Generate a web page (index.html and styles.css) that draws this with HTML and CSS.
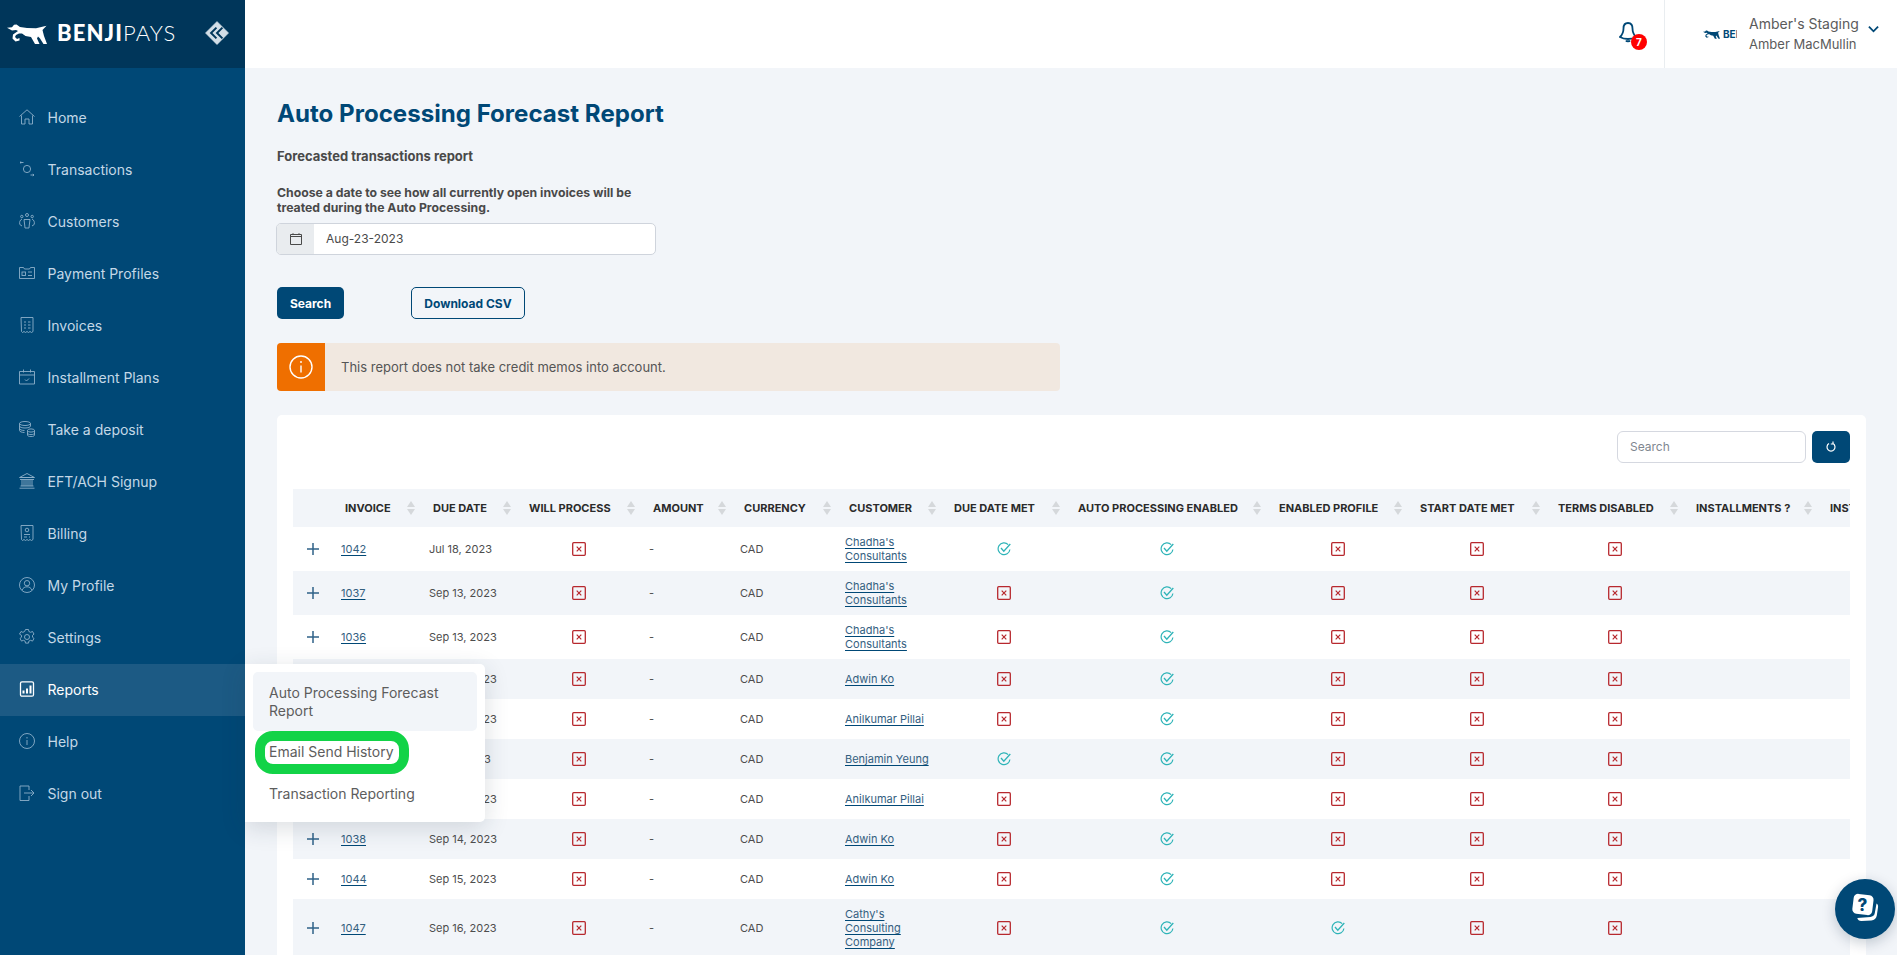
FILE: index.html
```html
<!DOCTYPE html>
<html lang="en">
<head>
<meta charset="utf-8">
<title>Auto Processing Forecast Report</title>
<link rel="stylesheet" href="styles.css">
</head>
<body>
<svg class="defs" aria-hidden="true">
  <symbol id="dog" viewBox="0 0 40 20"><path d="M0 3.800 5 3.200 7 .8 9.500 .6 13 3 20 4 29 4.200 39.500 1.800 35.500 6 37 12 40 20 36.500 20 33 14.500 31 12.500 30 14.500 32.500 20 28 20 24 13 18.500 12 15 9.500 12 9.500 9 11 8 13 10 15 12.500 14 12.500 16.500 8.500 17.500 5.500 14.500 6 10.500 11 7 9 6 5 6.500z"/></symbol>
  <symbol id="x" viewBox="0 0 14 14"><rect x=".7" y=".7" width="12.6" height="12.6" rx="1" fill="none" stroke="#b7282e" stroke-width="1.3"/><path d="M4.700 4.700 9.300 9.300M9.300 4.700 4.700 9.300" fill="none" stroke="#b7282e" stroke-width="1.2"/></symbol>
  <symbol id="ok" viewBox="0 0 14 14"><path d="M11.200 2.600A5.900 5.900 0 1 0 12.900 7.500" fill="none" stroke="#2fb4b8" stroke-width="1.200"/><path d="M4 6 6.800 9.200 13.300 2" fill="none" stroke="#2fb4b8" stroke-width="1.300"/></symbol>
  <symbol id="plus" viewBox="0 0 12 12"><path d="M6 0V12M0 6H12" stroke="#2f6288" stroke-width="1.5"/></symbol>
</svg>
<div class="app">
  <aside class="sidebar">
    <div class="brand">
      <svg class="brand-dog"><use href="#dog"/></svg>
      <span class="brand-name"><b>BENJI</b>PAYS</span>
      <svg class="brand-toggle" viewBox="0 0 24 24"><path d="M12 0 24 12 12 24 0 12Z" fill="#d3dee7" stroke="#d3dee7" stroke-width="1" stroke-linejoin="round" transform="translate(1.5 1.5) scale(.875)"/><path d="M11.500 7 6.500 12 11.500 17M17 7 12 12 17 17" fill="none" stroke="#00365a" stroke-width="1.8"/></svg>
    </div>
    <nav class="nav">
      <a class="nav-item"><svg class="nav-icon" viewBox="0 0 16 16"><path d="M.5 7.500 8 .8l7.500 6.700M2.500 6.500V15h3.500v-5h4v5h3.500V6.500"/></svg>Home</a>
      <a class="nav-item"><svg class="nav-icon" viewBox="0 0 16 16"><circle cx="8" cy="8" r="3.600"/><path d="M1 1.500h3.500M1 1.500l1.200-1M1 1.500l1.200 1M15 14h-3.500M15 14l-1.200-1M15 14l-1.200 1"/></svg>Transactions</a>
      <a class="nav-item"><svg class="nav-icon" viewBox="0 0 16 16"><circle cx="8" cy="2" r="1.500"/><circle cx="2.800" cy="3.500" r="1.200"/><circle cx="13.200" cy="3.500" r="1.200"/><path d="M5 6.500h6l-.7 5.500-.3 3H6l-.3-3zM3 6C1 7 .2 9 .8 11.500L3 13M13 6c2 1 2.800 3 2.200 5.500L13 13"/></svg>Customers</a>
      <a class="nav-item"><svg class="nav-icon" viewBox="0 0 16 16"><path d="M.5 2.500h4l1 1.500h5l1-1.500h4v11H.5z"/><rect x="3" y="7" width="3.500" height="3.500"/><path d="M9 7h4M9 10.500h4"/></svg>Payment Profiles</a>
      <a class="nav-item"><svg class="nav-icon" viewBox="0 0 16 16"><path d="M2 .5h12v14l-1.500 1-1.500-1-1.500 1-1.500-1-1.500 1-1.500-1-1.500 1-1-1z"/><path d="M5 5h2M9 5h2.500M5 8h2M9 8h2.500M5 11h2M9 11h2.500"/></svg>Invoices</a>
      <a class="nav-item"><svg class="nav-icon" viewBox="0 0 16 16"><path d="M.5 2.500h15v12.500H.5zM.5 6h15M4.500 .5v3M11.500 .5v3M6 10.500l1.500 1.500 2.500-2.500"/></svg>Installment Plans</a>
      <a class="nav-item"><svg class="nav-icon" viewBox="0 0 16 16"><ellipse cx="6" cy="2.500" rx="5.500" ry="2"/><path d="M.5 2.500v7c0 1.200 2.500 2 5 2M.5 5c0 1.200 2.500 2 5.500 2s5.500-.8 5.500-2V2.500M.5 7.500c0 1.200 2.500 2 5 2"/><ellipse cx="12" cy="9.500" rx="3.500" ry="1.600"/><path d="M8.500 9.500v4.500c0 1 1.500 1.600 3.500 1.600s3.500-.6 3.500-1.600V9.500M8.500 12c0 1 1.500 1.600 3.500 1.600s3.500-.6 3.500-1.600"/></svg>Take a deposit</a>
      <a class="nav-item"><svg class="nav-icon" viewBox="0 0 16 16"><path d="M.5 4.500 8 .5l7.500 4zM1 4.500h14M1 6.500h14M3 6.500v6.500M5 6.500v6.500M7 6.500v6.500M9 6.500v6.500M11 6.500v6.500M13 6.500v6.500M1.500 13h13M.5 15.200h15"/></svg>EFT/ACH Signup</a>
      <a class="nav-item"><svg class="nav-icon" viewBox="0 0 16 16"><path d="M2 .5h12v14l-1.500 1-1.500-1-1.500 1-1.500-1-1.500 1-1.500-1-1.500 1-1-1z"/><circle cx="8" cy="5" r="1.800"/><path d="M5 9.500h6M5 12h3M10 12h1"/></svg>Billing</a>
      <a class="nav-item"><svg class="nav-icon" viewBox="0 0 16 16"><circle cx="8" cy="8" r="7.500"/><circle cx="8" cy="6.200" r="2.700"/><path d="M3 13.200c1-2.500 3-3.400 5-3.400s4 .9 5 3.400"/></svg>My Profile</a>
      <a class="nav-item"><svg class="nav-icon" viewBox="0 0 16 16"><circle cx="8" cy="8" r="2.500"/><path d="M6.500.5h3l.4 2 1.700.8 1.900-.8 1.500 2.600-1.500 1.300v1.800l1.500 1.300-1.500 2.600-1.900-.8-1.700.8-.4 2h-3l-.4-2-1.700-.8-1.900.8-1.500-2.600 1.500-1.300V6.400L.5 5.100 2 2.500l1.900.8 1.700-.8z"/></svg>Settings</a>
      <a class="nav-item is-active"><svg class="nav-icon" viewBox="0 0 16 16"><rect x="1.500" y=".8" width="13" height="14.400" rx="1.500" stroke-width="1.300"/><path d="M4.500 9.500v3M8 7.500v5M11.500 4.500v8" stroke-width="2"/></svg>Reports</a>
      <a class="nav-item"><svg class="nav-icon" viewBox="0 0 16 16"><circle cx="8" cy="8" r="7.500"/><path d="M8 7v5M8 4v1.500"/></svg>Help</a>
      <a class="nav-item"><svg class="nav-icon" viewBox="0 0 16 16"><path d="M10 1H1v14.500h9M10 11v4.500M10 1v4M5 8h10M12 5l3 3-3 3"/></svg>Sign out</a>
    </nav>
  </aside>
  <div class="page">
    <header class="topbar">
      <div class="bell">
        <svg class="bell-icon" viewBox="0 0 18 21"><path d="M9 1C5.500 1 4.500 3.500 4.500 6.500c0 4-1.500 6.500-3.500 8.500 2 1.300 4.500 2 8 2s6-.7 8-2c-2-2-3.500-4.500-3.500-8.500C13.500 3.500 12.500 1 9 1Z"/><path d="M7 18.500c.5 1 3.500 1 4 0"/></svg>
        <span class="badge">7</span>
      </div>
      <div class="account">
        <div class="account-logo"><svg class="account-dog"><use href="#dog"/></svg><b>BENJI</b></div>
        <div class="account-text"><span class="account-org">Amber's Staging</span><span class="account-user">Amber MacMullin</span></div>
        <svg class="chevron" viewBox="0 0 12 8"><path d="M1 1.500 6 6.500 11 1.500"/></svg>
      </div>
    </header>
    <main class="content">
      <h1 class="title">Auto Processing Forecast Report</h1>
      <p class="sub">Forecasted transactions report</p>
      <p class="hint">Choose a date to see how all currently open invoices will be treated during the Auto Processing.</p>
      <div class="date-group">
        <span class="date-addon"><svg class="cal" viewBox="0 0 12 12"><path d="M.5 1.500h11v10H.5zM.5 3.500h11M3 .2v1.300M9 .2v1.300"/></svg></span>
        <span class="date-value">Aug-23-2023</span>
      </div>
      <div class="actions">
        <button class="btn btn-solid">Search</button>
        <button class="btn btn-outline">Download CSV</button>
      </div>
      <div class="alert">
        <span class="alert-icon"><svg viewBox="0 0 24 24"><circle cx="12" cy="12" r="11"/><path d="M12 10.500v7M12 6v2"/></svg></span>
        <span class="alert-text">This report does not take credit memos into account.</span>
      </div>
      <section class="card">
        <div class="toolbar">
          <span class="search">Search</span>
          <button class="refresh"><svg viewBox="0 0 12 12"><path d="M4 2.600A4 4 0 1 0 8 2.600M8 .6v2.400H5.800"/></svg></button>
        </div>
        <div class="table-wrap">
          <table class="grid">
            <colgroup>
              <col class="c0"><col class="c1"><col class="c2"><col class="c3"><col class="c4"><col class="c5"><col class="c6"><col class="c7"><col class="c8"><col class="c9"><col class="c10"><col class="c11"><col class="c12"><col class="c13">
            </colgroup>
            <thead>
              <tr>
                <th></th>
                <th><div class="th">Invoice<i class="sort"></i></div></th>
                <th><div class="th">Due Date<i class="sort"></i></div></th>
                <th><div class="th">Will Process<i class="sort"></i></div></th>
                <th><div class="th">Amount<i class="sort"></i></div></th>
                <th><div class="th">Currency<i class="sort"></i></div></th>
                <th><div class="th">Customer<i class="sort"></i></div></th>
                <th><div class="th">Due Date Met<i class="sort"></i></div></th>
                <th><div class="th">Auto Processing Enabled<i class="sort"></i></div></th>
                <th><div class="th">Enabled Profile<i class="sort"></i></div></th>
                <th><div class="th">Start Date Met<i class="sort"></i></div></th>
                <th><div class="th">Terms Disabled<i class="sort"></i></div></th>
                <th><div class="th">Installments ?<i class="sort"></i></div></th>
                <th><div class="th">Installment Date<i class="sort"></i></div></th>
              </tr>
            </thead>
            <tbody>
              <tr><td class="p"><svg class="plus"><use href="#plus"/></svg></td><td><a class="lnk">1042</a></td><td>Jul 18, 2023</td><td class="m"><svg class="ic"><use href="#x"/></svg></td><td>-</td><td>CAD</td><td><a class="lnk">Chadha's Consultants</a></td><td class="m"><svg class="ic"><use href="#ok"/></svg></td><td class="m"><svg class="ic"><use href="#ok"/></svg></td><td class="m"><svg class="ic"><use href="#x"/></svg></td><td class="m"><svg class="ic"><use href="#x"/></svg></td><td class="m"><svg class="ic"><use href="#x"/></svg></td><td></td><td></td></tr>
              <tr><td class="p"><svg class="plus"><use href="#plus"/></svg></td><td><a class="lnk">1037</a></td><td>Sep 13, 2023</td><td class="m"><svg class="ic"><use href="#x"/></svg></td><td>-</td><td>CAD</td><td><a class="lnk">Chadha's Consultants</a></td><td class="m"><svg class="ic"><use href="#x"/></svg></td><td class="m"><svg class="ic"><use href="#ok"/></svg></td><td class="m"><svg class="ic"><use href="#x"/></svg></td><td class="m"><svg class="ic"><use href="#x"/></svg></td><td class="m"><svg class="ic"><use href="#x"/></svg></td><td></td><td></td></tr>
              <tr><td class="p"><svg class="plus"><use href="#plus"/></svg></td><td><a class="lnk">1036</a></td><td>Sep 13, 2023</td><td class="m"><svg class="ic"><use href="#x"/></svg></td><td>-</td><td>CAD</td><td><a class="lnk">Chadha's Consultants</a></td><td class="m"><svg class="ic"><use href="#x"/></svg></td><td class="m"><svg class="ic"><use href="#ok"/></svg></td><td class="m"><svg class="ic"><use href="#x"/></svg></td><td class="m"><svg class="ic"><use href="#x"/></svg></td><td class="m"><svg class="ic"><use href="#x"/></svg></td><td></td><td></td></tr>
              <tr><td class="p"><svg class="plus"><use href="#plus"/></svg></td><td><a class="lnk">1039</a></td><td>Sep 13, 2023</td><td class="m"><svg class="ic"><use href="#x"/></svg></td><td>-</td><td>CAD</td><td><a class="lnk">Adwin Ko</a></td><td class="m"><svg class="ic"><use href="#x"/></svg></td><td class="m"><svg class="ic"><use href="#ok"/></svg></td><td class="m"><svg class="ic"><use href="#x"/></svg></td><td class="m"><svg class="ic"><use href="#x"/></svg></td><td class="m"><svg class="ic"><use href="#x"/></svg></td><td></td><td></td></tr>
              <tr><td class="p"><svg class="plus"><use href="#plus"/></svg></td><td><a class="lnk">1040</a></td><td>Sep 13, 2023</td><td class="m"><svg class="ic"><use href="#x"/></svg></td><td>-</td><td>CAD</td><td><a class="lnk">Anilkumar Pillai</a></td><td class="m"><svg class="ic"><use href="#x"/></svg></td><td class="m"><svg class="ic"><use href="#ok"/></svg></td><td class="m"><svg class="ic"><use href="#x"/></svg></td><td class="m"><svg class="ic"><use href="#x"/></svg></td><td class="m"><svg class="ic"><use href="#x"/></svg></td><td></td><td></td></tr>
              <tr><td class="p"><svg class="plus"><use href="#plus"/></svg></td><td><a class="lnk">1035</a></td><td>Aug 1, 2023</td><td class="m"><svg class="ic"><use href="#x"/></svg></td><td>-</td><td>CAD</td><td><a class="lnk">Benjamin Yeung</a></td><td class="m"><svg class="ic"><use href="#ok"/></svg></td><td class="m"><svg class="ic"><use href="#ok"/></svg></td><td class="m"><svg class="ic"><use href="#x"/></svg></td><td class="m"><svg class="ic"><use href="#x"/></svg></td><td class="m"><svg class="ic"><use href="#x"/></svg></td><td></td><td></td></tr>
              <tr><td class="p"><svg class="plus"><use href="#plus"/></svg></td><td><a class="lnk">1041</a></td><td>Sep 13, 2023</td><td class="m"><svg class="ic"><use href="#x"/></svg></td><td>-</td><td>CAD</td><td><a class="lnk">Anilkumar Pillai</a></td><td class="m"><svg class="ic"><use href="#x"/></svg></td><td class="m"><svg class="ic"><use href="#ok"/></svg></td><td class="m"><svg class="ic"><use href="#x"/></svg></td><td class="m"><svg class="ic"><use href="#x"/></svg></td><td class="m"><svg class="ic"><use href="#x"/></svg></td><td></td><td></td></tr>
              <tr><td class="p"><svg class="plus"><use href="#plus"/></svg></td><td><a class="lnk">1038</a></td><td>Sep 14, 2023</td><td class="m"><svg class="ic"><use href="#x"/></svg></td><td>-</td><td>CAD</td><td><a class="lnk">Adwin Ko</a></td><td class="m"><svg class="ic"><use href="#x"/></svg></td><td class="m"><svg class="ic"><use href="#ok"/></svg></td><td class="m"><svg class="ic"><use href="#x"/></svg></td><td class="m"><svg class="ic"><use href="#x"/></svg></td><td class="m"><svg class="ic"><use href="#x"/></svg></td><td></td><td></td></tr>
              <tr><td class="p"><svg class="plus"><use href="#plus"/></svg></td><td><a class="lnk">1044</a></td><td>Sep 15, 2023</td><td class="m"><svg class="ic"><use href="#x"/></svg></td><td>-</td><td>CAD</td><td><a class="lnk">Adwin Ko</a></td><td class="m"><svg class="ic"><use href="#x"/></svg></td><td class="m"><svg class="ic"><use href="#ok"/></svg></td><td class="m"><svg class="ic"><use href="#x"/></svg></td><td class="m"><svg class="ic"><use href="#x"/></svg></td><td class="m"><svg class="ic"><use href="#x"/></svg></td><td></td><td></td></tr>
              <tr><td class="p"><svg class="plus"><use href="#plus"/></svg></td><td><a class="lnk">1047</a></td><td>Sep 16, 2023</td><td class="m"><svg class="ic"><use href="#x"/></svg></td><td>-</td><td>CAD</td><td><a class="lnk">Cathy's Consulting Company</a></td><td class="m"><svg class="ic"><use href="#x"/></svg></td><td class="m"><svg class="ic"><use href="#ok"/></svg></td><td class="m"><svg class="ic"><use href="#ok"/></svg></td><td class="m"><svg class="ic"><use href="#x"/></svg></td><td class="m"><svg class="ic"><use href="#x"/></svg></td><td></td><td></td></tr>
            </tbody>
          </table>
        </div>
      </section>
    </main>
  </div>
  <div class="flyout">
    <a class="fly-item is-current">Auto Processing Forecast Report</a>
    <a class="fly-item fly-email">Email Send History</a>
    <a class="fly-item">Transaction Reporting</a>
    <span class="ring"></span>
  </div>
  <button class="help">
    <svg viewBox="0 0 32 32"><path d="M27.500 10.500c1.500 1 1.800 2.400 1.500 4l-1.200 8c-.5 3-2.500 4.800-5.500 5l-10 .6c-2.200 0-3.500-1-4-3l13-1c2.600-.3 4-1.500 4.500-4z" fill="#fff"/><rect x="4" y="1.500" width="20" height="20" rx="4.500" fill="#fff" transform="rotate(7 14 11)"/><text x="13.500" y="18" class="help-q">?</text></svg>
  </button>
</div>
</body>
</html>
```
FILE: styles.css
```css
* { box-sizing: border-box; }
html, body { margin: 0; height: 100%; }
body { font-family: Inter, "Liberation Sans", sans-serif; font-size: 11px; color: #4a4a4a; background: #f2f5f9; overflow: hidden; }
.defs { width: 0; height: 0; position: absolute; }
a { text-decoration: none; }
button { font-family: inherit; cursor: pointer; }

.app { display: flex; height: 955px; overflow: hidden; position: relative; }

.sidebar { width: 245px; flex: none; background: #004876; }
.brand { height: 68px; background: #00365a; display: flex; align-items: center; padding-left: 7px; color: #fff; }
.brand-dog { width: 40px; height: 20px; fill: #fff; flex: none; margin-top: -1px; }
.brand-name { margin-left: 10px; font-family: Lato, sans-serif; font-size: 22px; font-weight: 300; letter-spacing: 1.1px; line-height: 1; margin-top: -2px; }
.brand-name b { font-weight: 900; }
.brand-toggle { width: 26px; height: 26px; margin-left: 28px; flex: none; margin-top: -3px; }

.nav { padding-top: 24px; display: flex; flex-direction: column; }
.nav-item { height: 52px; display: flex; align-items: center; padding: 0 0 2px 19px; font-size: 14px; color: #c4d8e7; }
.nav-icon { width: 16px; height: 16px; margin-right: 12.5px; flex: none; fill: none; stroke: #8db0c9; stroke-width: .9; }
.nav-item.is-active { background: #1c5a84; color: #fff; }
.nav-item.is-active .nav-icon { stroke: #fff; }

.page { flex: 1; min-width: 0; display: flex; flex-direction: column; }
.topbar { height: 68px; flex: none; background: #fff; display: flex; justify-content: flex-end; }
.bell { position: relative; width: 18px; height: 21px; margin: 22px 27px 0 0; }
.bell-icon { width: 18px; height: 21px; fill: none; stroke: #004876; stroke-width: 1.8; display: block; }
.badge { position: absolute; left: 12px; top: 12px; width: 16px; height: 16px; border-radius: 50%; background: #f00; color: #fff; font-size: 10px; font-weight: 700; line-height: 16px; text-align: center; }
.account { width: 233px; border-left: 1px solid #e9edf0; display: flex; align-items: center; padding-left: 38px; }
.account-logo { width: 34px; height: 12px; overflow: hidden; display: flex; align-items: center; gap: 3px; color: #004876; font-size: 10px; white-space: nowrap; flex: none; }
.account-dog { width: 17px; height: 9px; fill: #004876; flex: none; }
.account-text { margin-left: 12px; display: flex; flex-direction: column; color: #5b5b5b; font-size: 14px; line-height: 20px; }
.account-user { font-size: 13px; }
.chevron { width: 11px; height: 8px; margin-left: 9px; margin-top: -11px; fill: none; stroke: #004876; stroke-width: 2; flex: none; }

.content { padding: 30px 31px 0 32px; flex: 1; min-height: 0; }
.title { margin: 0; font-size: 24.1px; font-weight: 700; line-height: 32px; color: #004876; }
.sub { margin: 18px 0 0; font-size: 13px; font-weight: 700; line-height: 16px; color: #494949; }
.hint { margin: 21px 0 0; width: 380px; font-size: 12.25px; font-weight: 700; line-height: 15px; color: #494949; }
.date-group { margin: 8px 0 0 -1px; width: 380px; height: 32px; display: flex; border: 1px solid #cfd4dc; border-radius: 5px; background: #fff; overflow: hidden; }
.date-addon { width: 37px; background: #e9ecef; display: flex; align-items: center; justify-content: center; flex: none; }
.cal { width: 12px; height: 12px; fill: none; stroke: #4a4a4a; stroke-width: 1; }
.date-value { padding-left: 12px; line-height: 30px; font-size: 12px; color: #4a4a4a; }
.actions { margin-top: 32px; display: flex; gap: 67px; }
.btn { height: 32px; border-radius: 5px; font-size: 12px; font-weight: 700; padding: 0; }
.btn-solid { width: 67px; background: #004876; color: #fff; border: 0; }
.btn-outline { width: 114px; background: transparent; color: #004876; border: 1px solid #004876; }
.alert { margin-top: 24px; width: 783px; height: 48px; display: flex; align-items: center; background: #f1e8e0; border-radius: 4px; overflow: hidden; }
.alert-icon { width: 48px; height: 48px; background: #ef6f00; display: flex; align-items: center; justify-content: center; flex: none; }
.alert-icon svg { width: 24px; height: 24px; fill: none; stroke: #fff; stroke-width: 1.400; }
.alert-text { margin-left: 16px; font-size: 13px; color: #555; }

.card { margin-top: 24px; background: #fff; border-radius: 5px; padding: 16px 16px 0; height: 600px; }
.toolbar { display: flex; justify-content: flex-end; gap: 6px; height: 32px; }
.search { width: 189px; height: 32px; border: 1px solid #d5d8e0; border-radius: 6px; padding-left: 12px; line-height: 30px; font-size: 12px; color: #7f8790; }
.refresh { width: 38px; height: 32px; border: 0; border-radius: 5px; background: #004876; display: flex; align-items: center; justify-content: center; padding: 0; }
.refresh svg { width: 12px; height: 12px; fill: none; stroke: #fff; stroke-width: 1.200; }

.table-wrap { margin-top: 26px; width: 1557px; overflow: hidden; }
.grid { table-layout: fixed; width: 1729px; border-collapse: collapse; }
.c0 { width: 44px; } .c1 { width: 88px; } .c2 { width: 96px; } .c3 { width: 124px; } .c4 { width: 91px; } .c5 { width: 105px; } .c6 { width: 105px; } .c7 { width: 124px; } .c8 { width: 201px; } .c9 { width: 141px; } .c10 { width: 138px; } .c11 { width: 138px; } .c12 { width: 134px; } .c13 { width: 200px; }
.grid th { height: 38px; background: #f2f5f9; padding: 0 10px 0 8px; text-align: left; }
.th { display: flex; align-items: center; justify-content: space-between; font-size: 11px; font-weight: 700; text-transform: uppercase; color: #2b2b2b; white-space: nowrap; }
.sort { width: 8px; height: 14px; flex: none; position: relative; }
.sort::before, .sort::after { content: ""; position: absolute; left: 0; border-left: 4px solid transparent; border-right: 4px solid transparent; }
.sort::before { top: 0; border-bottom: 6px solid #d5d8db; }
.sort::after { bottom: 0; border-top: 6px solid #d5d8db; }
.grid td { height: 40px; padding: 8px 8px 8px 4px; font-size: 11px; line-height: 14px; color: #4d4d4d; vertical-align: middle; }
.grid tbody tr:nth-child(even) td { background: #f2f5f9; }
.grid td.m { text-align: center; padding-left: 0; }
.grid td.p { padding: 0 0 0 14px; }
.plus { width: 12px; height: 12px; display: block; }
.ic { width: 14px; height: 14px; display: block; margin: 0 auto; }
.lnk { color: #34607f; text-decoration: underline; text-decoration-color: #004876; text-underline-offset: 2px; }

.flyout { position: absolute; left: 245px; top: 664px; width: 240px; height: 158px; background: #fff; border-radius: 0 5px 5px 0; padding: 8px; box-shadow: 0 6px 24px rgba(30, 50, 70, .16); }
.fly-item { display: block; padding: 0 16px; font-size: 14px; line-height: 18px; color: #5d5d5d; border-radius: 5px; }
.is-current { background: #f2f5f9; padding-top: 12px; padding-bottom: 11px; height: 59px; }
.fly-email { margin-top: 12px; margin-bottom: 24px; }
.ring { position: absolute; left: 10px; top: 67px; width: 154px; height: 43px; border: 10px solid #12d347; border-radius: 18px; }

.help { position: absolute; left: 1835px; top: 879px; width: 60px; height: 60px; border: 0; border-radius: 50%; background: #004876; box-shadow: 0 4px 14px rgba(0, 30, 60, .22); padding: 14px; }
.help svg { width: 32px; height: 32px; display: block; }
.help-q { font-family: Inter, sans-serif; font-size: 17px; font-weight: 800; fill: #004876; text-anchor: middle; }
```
